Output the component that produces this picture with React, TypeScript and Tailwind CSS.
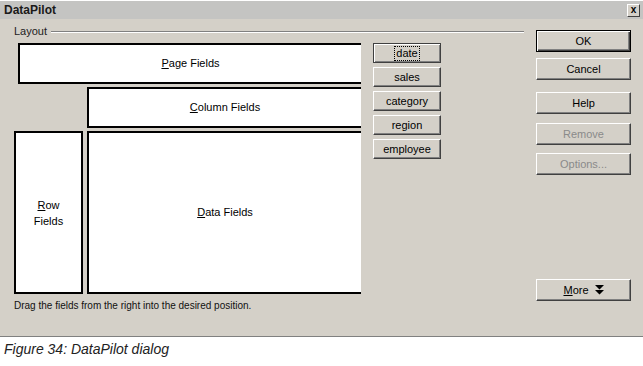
import React from "react";

const btn =
  "flex items-center justify-center border-t border-l border-t-white border-l-white border-r border-b border-r-[#404040] border-b-[#404040] shadow-[inset_-1px_-1px_0_#808080] bg-[#d4d0c8] text-[11px] leading-none";

function FieldBtn({ label, focus }: { label: string; focus?: boolean }) {
  return (
    <div
      className={
        focus
          ? "flex h-[20px] w-[68px] items-center justify-center border border-[#404040] shadow-[inset_1px_1px_0_#fff,inset_-1px_-1px_0_#808080] bg-[#d4d0c8] text-[11px] leading-none"
          : "h-[20px] w-[68px] " + btn
      }
    >
      <span className={focus ? "border border-dotted border-black px-[1px] py-[1px]" : ""}>{label}</span>
    </div>
  );
}

function SideBtn({
  children,
  disabled,
  def,
  className = "",
}: {
  children: React.ReactNode;
  disabled?: boolean;
  def?: boolean;
  className?: string;
}) {
  return (
    <div
      className={
        (def
          ? "flex h-[22px] w-[95px] items-center justify-center border border-black shadow-[inset_1px_1px_0_#fff,inset_-1px_-1px_0_#404040,inset_-2px_-2px_0_#808080] bg-[#d4d0c8] text-[11px] leading-none"
          : "h-[22px] w-[95px] " + btn) +
        " " +
        (disabled ? "text-[#8a8a8a]" : "text-black") +
        " " +
        className
      }
    >
      {children}
    </div>
  );
}

export default function App() {
  return (
    <div
      className="w-[643px] h-[366px] bg-white overflow-hidden"
      style={{ fontFamily: '"Liberation Sans", Arial, sans-serif' }}
    >
      <div className="flex h-[337px] flex-col border-t border-t-white border-b border-b-[#808080] bg-[#d4d0c8]">
        {/* title bar */}
        <div className="flex h-[18px] items-center justify-between bg-[#c4c4c2] pl-[4px] pr-[3px]">
          <span className="text-[12px] font-bold text-[#1a1a1a]">DataPilot</span>
          <div className="flex h-[13px] w-[13px] items-center justify-center border border-t-white border-l-white border-r-[#404040] border-b-[#404040] bg-[#d4d0c8] text-[10px] font-bold leading-none">
            x
          </div>
        </div>

        <div className="flex flex-1">
          {/* left */}
          <div className="flex w-[524px] flex-col pl-[14px]">
            <div className="mt-[6px] flex h-[13px] items-center">
              <span className="text-[11px] leading-none text-[#222]">Layout</span>
              <div className="ml-[4px] flex-1 border-t border-t-[#808080] border-b border-b-white" />
            </div>

            <div className="mt-[5px] flex">
              <div className="flex w-[347px] flex-col">
                <div className="ml-[4px] flex h-[41px] items-center justify-center border-2 border-r-0 border-black bg-white text-[11px]">
                  <span>
                    <u>P</u>age Fields
                  </span>
                </div>
                <div className="ml-[73px] mt-[3px] flex h-[41px] items-center justify-center border-2 border-r-0 border-black bg-white text-[11px]">
                  <span>
                    <u>C</u>olumn Fields
                  </span>
                </div>
                <div className="mt-[3px] flex h-[163px] gap-[4px]">
                  <div className="flex w-[69px] items-center justify-center border-2 border-black bg-white text-center text-[11px] leading-[16px]">
                    <span>
                      <u>R</u>ow
                      <br />
                      Fields
                    </span>
                  </div>
                  <div className="flex flex-1 items-center justify-center border-2 border-r-0 border-black bg-white text-[11px]">
                    <span>
                      <u>D</u>ata Fields
                    </span>
                  </div>
                </div>
              </div>

              <div className="ml-[12px] flex flex-col gap-[4px]">
                <FieldBtn label="date" focus />
                <FieldBtn label="sales" />
                <FieldBtn label="category" />
                <FieldBtn label="region" />
                <FieldBtn label="employee" />
              </div>
            </div>

            <div className="mt-[7px] text-[10px] leading-none text-[#111]">
              Drag the fields from the right into the desired position.
            </div>
          </div>

          {/* right */}
          <div className="ml-[12px] flex flex-col pt-[11px]">
            <SideBtn def>OK</SideBtn>
            <SideBtn className="mt-[6px]">Cancel</SideBtn>
            <SideBtn className="mt-[12px]">Help</SideBtn>
            <SideBtn className="mt-[9px]" disabled>
              Remove
            </SideBtn>
            <SideBtn className="mt-[8px]" disabled>
              Options...
            </SideBtn>
            <SideBtn className="mt-[104px]">
              <span className="flex items-center gap-[6px]">
                <span>
                  <u>M</u>ore
                </span>
                <svg width="9" height="10" viewBox="0 0 9 10">
                  <path d="M0 0h9L4.5 4.5z M0 5h9L4.5 9.5z" fill="#000" />
                </svg>
              </span>
            </SideBtn>
          </div>
        </div>
      </div>

      <div className="pl-[4px] pt-[5px] text-[14px] italic leading-none text-[#222]">
        Figure 34: DataPilot dialog
      </div>
    </div>
  );
}
